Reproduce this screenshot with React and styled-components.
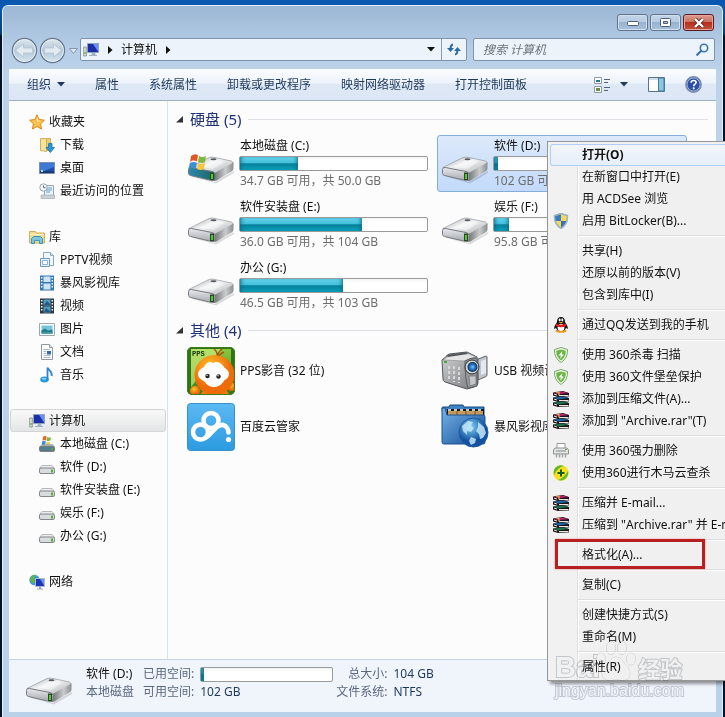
import React from "react";
import styled, { createGlobalStyle, css } from "styled-components";

const Global = createGlobalStyle`
  * { box-sizing: border-box; }
  body { margin: 0; overflow: hidden; background: #021227; }
  body, button, input {
    font-family: "Noto Sans", "Noto Sans CJK SC", sans-serif;
    font-size: 12px;
    line-height: 18px;
    color: #111;
  }
  button { border: 0; padding: 0; background: none; text-align: left; white-space: nowrap; }
  svg { display: block; flex: none; }
  ul { list-style: none; margin: 0; padding: 0; }
`;

const Desktop = styled.div`
  position: relative;
  min-height: 100vh;
  display: flex;
  padding: 5px 2px 0;
  overflow: hidden;
  background: linear-gradient(#0a57b0 0, #0a57b0 8px, #063a7c 34px, #021227 36px);
`;
const Window = styled.div`
  flex: 1;
  min-width: 0;
  display: flex;
  flex-direction: column;
  padding: 0 6px 5px;
  border: 1px solid #e3effa;
  border-bottom: 0;
  border-radius: 6px 6px 0 0;
  background: linear-gradient(#9cb7d4 0, #b4cce6 40px, #bcd3ea 70px, #b9d1e9 100%);
`;
const TitleBar = styled.header`
  display: flex;
  justify-content: flex-end;
  align-items: flex-start;
  height: 30px;
  padding-top: 8px;
  gap: 2px;
  margin-right: 2px;
`;
const Caption = styled.button`
  display: grid;
  place-items: center;
  width: 31px;
  height: 17px;
  border: 1px solid ${p => (p.$close ? "#5c1a22" : "#5f738c")};
  border-radius: 3px;
  box-shadow: inset 0 0 0 1px ${p => (p.$close ? "#e3a79f" : "#d3e1f0")};
  background: ${p => (p.$close
    ? "linear-gradient(#dc9a8d 0, #cd6f5e 48%, #b3301c 50%, #c4533a)"
    : "linear-gradient(#c3d5e8 0, #b5cae1 48%, #98b3d0 50%, #a9c2dc)")};
`;
const NavBar = styled.nav`
  display: flex;
  align-items: center;
  height: 33px;
  padding: 0 1px 6px 2px;
`;
const Travel = styled.div`
  display: flex;
  align-items: center;
  gap: 1px;
  width: 69px;
  margin-top: 2px;
`;
const Address = styled.div`
  flex: 1;
  display: flex;
  align-items: center;
  height: 23px;
  border: 1px solid #7f93ab;
  border-radius: 2px;
  background: #edf3fa;
  padding-left: 2px;
`;
const Crumb = styled.button`
  padding: 0 8px 0 9px;
`;
const History = styled(Crumb)`
  padding-right: 6px;
`;
const Spring = styled.div` flex: 1; `;
const Refresh = styled.button`
  display: grid;
  place-items: center;
  width: 25px;
  height: 21px;
  border-left: 1px solid #8b9cb1;
`;
const Search = styled.label`
  display: flex;
  align-items: center;
  width: 242px;
  height: 23px;
  margin-left: 6px;
  padding: 0 5px 0 9px;
  border: 1px solid #7f93ab;
  border-radius: 2px;
  background: #edf3fa;
  input {
    flex: 1;
    min-width: 0;
    border: 0;
    padding: 0;
    background: none;
    outline: 0;
    font-style: italic;
  }
  input::placeholder { color: #6d7278; opacity: 1; }
`;
const Client = styled.div`
  flex: 1;
  display: flex;
  flex-direction: column;
  background: #fcfcfd;
`;
const Toolbar = styled.div`
  display: flex;
  align-items: center;
  height: 32px;
  padding: 0 14px 0 18px;
  gap: 30px;
  background: linear-gradient(#fbfdff 0, #edf3fb 45%, #dfe8f5 50%, #dbe6f5);
  border-bottom: 1px solid #9fb0c6;
`;
const Tool = styled.button`
  display: flex;
  align-items: center;
  gap: 6px;
  color: #1e395b;
`;
const ToolGroup = styled.div`
  display: flex;
  align-items: center;
  gap: ${p => p.$gap}px;
`;
const Body = styled.div`
  flex: 1;
  display: flex;
`;
const Sidebar = styled.aside`
  width: 159px;
  border-right: 1px solid #d9e3ef;
  padding: 9px 1px;
  display: flex;
  flex-direction: column;
  gap: 23px;
`;
const TreeRow = styled.button`
  display: flex;
  align-items: center;
  gap: ${p => (p.$child ? 5 : 4)}px;
  width: 100%;
  height: 23px;
  padding-left: ${p => (p.$child ? 28 : 18)}px;
  border: 1px solid transparent;
  border-radius: 3px;
  ${p => p.$selected && css`
    border-color: #d2d4d6;
    background: linear-gradient(#f9f9f9, #e4e5e6);
  `}
`;
const Main = styled.main`
  flex: 1;
  min-width: 0;
  padding: 6px 8px 0;
`;
const GroupHead = styled.h2`
  display: flex;
  align-items: center;
  gap: 7px;
  margin: 0;
  height: 24px;
  font-size: 15px;
  font-weight: 400;
  line-height: 20px;
  color: #1f3278;
  &::after {
    content: "";
    flex: 1;
    height: 1px;
    background: #dde1e6;
  }
`;
const Grid = styled.div`
  display: grid;
  grid-template-columns: repeat(auto-fill, 250px);
  gap: ${p => p.$gap}px 4px;
  padding: 4px 0 4px 7px;
`;
const Tile = styled.div`
  display: flex;
  align-items: flex-start;
  gap: 4px;
  height: ${p => (p.$drive ? 57 : 56)}px;
  padding-left: 3px;
  border: 1px solid transparent;
  border-radius: 3px;
  ${p => p.$selected && css`
    border-color: #84acdd;
    background: linear-gradient(#dde9fa, #c2dafb);
  `}
`;
const Art = styled.div` padding-top: ${p => (p.$drive ? 8 : 0)}px; `;
const DriveInfo = styled.div`
  width: 190px;
  display: flex;
  flex-direction: column;
  gap: 1px;
  padding-top: 1px;
`;
const Name = styled.span` padding-left: 1px; white-space: nowrap; `;
const Label = styled(Name)` line-height: 48px; `;
const Free = styled(Name)` color: #6d6d6d; `;
const Meter = styled.div`
  height: 15px;
  width: ${p => (p.$wide ? 133 : 189)}px;
  border: 1px solid #9a9a9c;
  border-radius: 2px;
  background: linear-gradient(#f4f4f4, #fff 30%);
`;
const Fill = styled.div`
  height: 100%;
  background: linear-gradient(#66d3ea 0, #42c0dc 45%, #067f9a 52%, #0ca3bb 100%);
  box-shadow: inset 4px 0 4px -3px #0b6c87, inset -4px 0 4px -3px #0b6c87;
`;
const Details = styled.footer`
  display: flex;
  align-items: flex-start;
  height: 53px;
  padding: 5px 0 0 16px;
  border-top: 1px solid #c6d3e4;
  background: #f0f4fb;
  color: #1e395b;
  white-space: nowrap;
`;
const DetailsArt = styled.div` margin-right: 13px; `;
const Facts = styled.dl`
  display: grid;
  grid-template-columns: auto auto;
  column-gap: 6px;
  grid-auto-rows: 18px;
  align-items: center;
  margin: 0 0 0 ${p => p.$indent}px;
  dt { color: #5a6980; text-align: right; }
  dd { margin: 0; }
`;
const DetailsTitle = styled.div`
  strong { display: block; font-size: 12px; font-weight: 400; color: #111; }
  span { color: #5a6980; }
`;
const Menu = styled.div`
  position: absolute;
  left: 547px;
  top: 141px;
  width: 200px;
  padding: 2px;
  border: 1px solid #979797;
  background: linear-gradient(90deg, #f1f1f1 0, #f1f1f1 29px, #e0e0e0 29px, #e0e0e0 30px, #fff 30px, #fff 31px, #f0f0f0 31px);
  box-shadow: 3px 3px 3px #0006;
`;
const MenuItem = styled.button`
  position: relative;
  display: flex;
  align-items: center;
  width: 100%;
  height: 22px;
  border-radius: 3px;
  font-weight: ${p => (p.$bold ? 700 : 400)};
  ${p => p.$hot && css`
    box-shadow: inset 0 0 0 1px #aecff7;
    background: linear-gradient(#f3f6fa, #e6eef9);
  `}
`;
const MenuIcon = styled.span`
  flex: none;
  width: 32px;
  padding-left: 3px;
`;
const Rule = styled.hr`
  height: 2px;
  margin: 3px 0 3px 28px;
  border: 0;
  border-top: 1px solid #dedede;
  border-bottom: 1px solid #fff;
`;
const Marker = styled.span`
  position: absolute;
  left: 5px;
  top: -5px;
  width: 150px;
  height: 30px;
  border: 3px solid #b81f20;
  box-shadow: 0 0 2px #e88;
`;
const Watermark = styled.div`
  position: absolute;
  left: 555px;
  top: 640px;
  width: 140px;
  color: #fff;
  -webkit-text-stroke: 2px #cfd2d6;
  paint-order: stroke fill;
  mix-blend-mode: multiply;
  pointer-events: none;
`;
const Brand = styled.div`
  display: flex;
  align-items: center;
  height: 42px;
  padding-top: 11px;
  font: 700 29px/30px "Liberation Sans", sans-serif;
  b { font: 700 22px/30px "Noto Sans CJK SC", sans-serif; }
`;
const Site = styled.div`
  font: 400 16px/18px "Liberation Sans", sans-serif;
`;

/* ---------- drawings ---------- */
const Svg = ({ s = 16, w = s, h = s, vb, children }) => (
  <svg width={w} height={h} viewBox={vb || `0 0 ${w} ${h}`} aria-hidden="true">{children}</svg>
);
const Arrow = ({ down, color = "#111" }) => down
  ? <Svg w={8} h={5}><path d="M0 0h8L4 4.5z" fill={color} /></Svg>
  : <Svg w={5} h={8}><path d="M0 0v8l4.5-4z" fill={color} /></Svg>;

const Round = ({ flip }) => (
  <Svg s={27}>
    <defs><linearGradient id="rnd" x2="0" y2="1">
      <stop stopColor="#dfe8f0" /><stop offset=".5" stopColor="#b4c6d7" /><stop offset="1" stopColor="#d5e5f1" />
    </linearGradient></defs>
    <circle cx="13.5" cy="13.5" r="12" fill="url(#rnd)" stroke="#65788c" strokeWidth="1.4" />
    <circle cx="13.5" cy="13.5" r="11" fill="none" stroke="#e9f1f7" />
    <path transform={flip ? "matrix(-1 0 0 1 27 0)" : undefined} d="M4.500 13.500 12.500 7v4h9v5h-9v4z" fill="#e3ebf2" stroke="#b3c3d2" strokeWidth=".8" />
  </Svg>
);
const Computer = () => (
  <Svg>
    <path d="M.7 5h2.6v9H.7z" fill="#dfe3df" stroke="#7c8a80" strokeWidth=".8" /><path d="M1.5 10h1v2h-1z" fill="#4a9a3c" />
    <path d="M4.5 1.5h11v9h-11z" fill="#1a2fa8" stroke="#8fa3bd" />
    <path d="M10 2h5v7.5z" fill="#6d8df0" /><path d="M9 11h3l.6 2H14v1H6v-1h2.4z" fill="#9fb1c4" />
  </Svg>
);
const Star = () => <Svg><path d="m8 .8 2.2 4.7 5.2.7-3.8 3.6.9 5.2L8 12.5 3.500 15l.9-5.200L.6 6.200l5.200-.7z" fill="#fbc24a" stroke="#dd8420" /><path d="m8 3 1.400 3.400 3.200.5L8 8z" fill="#ffe9a8" /></Svg>;
const Downloads = () => <Svg><path d="M1.500 1.500h6v13l-6-1z" fill="#f6e39b" stroke="#d0b055" /><path d="M7.500 1.500h4v12h-4z" fill="#e8cd74" stroke="#d0b055" /><path d="M9.500 6.500h3.500v4h2.500l-4.200 5-4.300-5h2.500z" fill="#2d95d8" stroke="#1870ae" strokeWidth=".8" /></Svg>;
const DesktopIcon = () => <Svg><path d="M.5 2.500h15v11H.5z" fill="#1f4fae" stroke="#7c8fa8" /><path d="M1 3h14v4L5 11H1z" fill="#3f78d4" /><path d="M1 11h14v2H1z" fill="#173b78" /><path d="M2 10h2v2H2z" fill="#c7d8ee" /></Svg>;
const Recent = () => <Svg><path d="M5.500 2.500h9v10h-9z" fill="#eef4fa" stroke="#91a5b8" /><path d="M7 5h6M7 7h6M7 9h4" stroke="#5c9ac9" /><circle cx="4.500" cy="4.500" r="3.700" fill="#f5f7f9" stroke="#99a5b0" /><path d="M4.500 2.500v2.200H6.500" stroke="#667" fill="none" /><path d="M2 12h13.500v3.500H2z" fill="#c8d0d8" stroke="#99a5b0" strokeWidth=".6" /></Svg>;
const Library = () => <Svg><path d="M.5 2.500h6l1 1.500h8v10H.5z" fill="#f2dd91" stroke="#cfae5a" /><path d="M1 5.500h14" stroke="#fff3c8" /><path d="M2.500 14.500v-5l2-2h7l2 2v5h-3v-3h-5v3z" fill="#7cc6dd" stroke="#3f93b4" /></Svg>;
const Pptv = () => <Svg><path d="M4.500.5h7l3 3v10h-10z" fill="#f3f8fc" stroke="#87a9c4" /><path d="M11.500.5v3h3" fill="#cfe0ee" stroke="#87a9c4" /><path d="M1.500 6.500h9v8h-9z" fill="#e7f1f9" stroke="#6c9bc0" /><path d="M3.500 8.500h5v4h-5z" fill="#fff" stroke="#8eb3d0" /></Svg>;
const Film = ({ dark }) => <Svg><path d="M1 .5h14v15H1z" fill={dark ? "#2e363b" : "#3478b4"} /><path d="M4.500 1.500h7v6h-7zM4.500 8.500h7v6h-7z" fill={dark ? "#4d9fcb" : "#cde4f5"} /><path d={dark ? "m5 7 3-4 3 3v1zM5 14l2-4 4 3v1z" : "M4 7.500h8"} fill={dark ? "#205a83" : "none"} stroke={dark ? "none" : "#3478b4"} /><path d="M2.700 2v12M13.300 2v12" stroke="#fff" strokeWidth="1.500" strokeDasharray="1.500 1.500" /></Svg>;
const Picture = () => <Svg><path d="M.5 2.500h15v12H.5z" fill="#fff" stroke="#9aa8b3" /><path d="M2.500 4.500h11v8h-11z" fill="#75c3dc" /><path d="M2.500 9.500 6 7.500l3 2 4.500-1v4h-11z" fill="#247c8c" /><path d="M2.500 11h11v1.500h-11z" fill="#3a98a0" /></Svg>;
const Doc = () => <Svg><path d="M2.500.5h8l3 3v12h-11z" fill="#fff" stroke="#8d99a5" /><path d="M10.500.5v3h3" fill="#dde5ec" stroke="#8d99a5" /><path d="M4.500 5.500h6M4.500 7.500h3M4.500 9.500h3M4.500 11.500h7M4.500 13.500h7" stroke="#a9bac9" /><path d="M8 7h4v3.500H8z" fill="#326ca0" /></Svg>;
const Note = () => <Svg><ellipse cx="5.500" cy="12.500" rx="4.300" ry="3" fill="#299bdb" /><path d="M8.500 12.500V.5c1 3 5 3.500 4.200 8.500" fill="none" stroke="#3386c8" strokeWidth="1.800" /><ellipse cx="5" cy="11.800" rx="2.200" ry="1" fill="#84d0f4" /></Svg>;
const MiniDrive = ({ sys }) => (
  <Svg>
    {sys && <><path d="M4 1q2-2 3.500-.5L7 4.500Q5 3.500 3.500 4.500z" fill="#e8642c" /><path d="M8 1q2 1 4 0l-.7 3.600Q9 5.500 7.500 4.500z" fill="#7bb93c" /><path d="M3.300 5.200Q5 4.200 6.800 5.400L6 9.500H2.700z" fill="#3d8ed4" /><path d="M7.500 5.700q2 1 3.600.2L10.500 9.500H6.800z" fill="#f5c53a" /></>}
    <path d={sys ? "m2.500 9-2 2h15l-2-2.500z" : "m3 6.500-2.500 3h15l-2.500-3z"} fill={sys ? "#9fb5ba" : "#eceef0"} stroke="#9a9fa4" strokeWidth=".7" />
    <rect x=".5" y={sys ? 10.500 : 9} width="15" height={sys ? 5 : 5.500} rx="1.500" fill={sys ? "#547d88" : "#d9dcdf"} stroke="#777c80" strokeWidth=".9" />
    <path d={sys ? "M12 12h2v2h-2z" : "M12 10.500h2v3h-2z"} fill="#4fae35" />
  </Svg>
);
const Network = () => <Svg><circle cx="5.500" cy="6" r="5.200" fill="#3a9ed0" /><path d="M2 3q3-3 5-2L5 4l2 2-3 4-3-4z" fill="#63b24a" /><path d="M6.500 4.500h9v8h-9z" fill="#1b35b4" stroke="#a9bacd" /><path d="M11 5h4v6.500z" fill="#6d8df0" /><path d="M10 13h2v1.500h2v1H8v-1h2z" fill="#93a6ba" /></Svg>;

const Drive = ({ sys }) => (
  <Svg s={48}>
    <defs>
      <linearGradient id="dtop" x2="1" y2="1"><stop stopColor="#b9bbbd" /><stop offset=".45" stopColor="#f1f2f3" /><stop offset="1" stopColor="#a6a9ac" /></linearGradient>
      <linearGradient id="dfront" x2="0" y2="1"><stop stopColor="#e9eaf0" /><stop offset="1" stopColor="#a5a7ad" /></linearGradient>
      <linearGradient id="dside" x2="1" y2="0"><stop stopColor="#6f7276" /><stop offset=".6" stopColor="#c9cbcd" /><stop offset="1" stopColor="#8b8e91" /></linearGradient>
      <linearGradient id="dsys" x2="1" y2="0"><stop stopColor="#2e88b0" /><stop offset="1" stopColor="#17665c" /></linearGradient>
    </defs>
    <path d="M4 31 27 38 47 27v2L29 39.500 6 33z" fill="#0002" />
    <path d="M2 23.500 21 14q3-1.500 6-.7L44.500 17q2 .8 1.500 3L28 29.500 3 25z" fill="url(#dtop)" stroke="#85888b" strokeWidth=".6" />
    <path d="M46.500 18.500v6q0 2-2 3L29.500 36.500 27 37v-7.500z" fill="url(#dside)" />
    <path d="M1.500 25.500q0-2.500 3-2L25 27.500q3 .7 3 3V35q0 2-2.500 1.700L3.500 31.500q-2-.7-2-2z" fill={sys ? "url(#dsys)" : "url(#dfront)"} stroke="#76797e" />
    <path d="M12 22.500 26 15.500l11 2.500-11 7z" fill="#fff7" />
    <ellipse cx="26.500" cy="15.300" rx="3" ry="1" fill="#555a5f" />
    <path d="M23 28.500h4V36h-4z" fill="#244d20" /><path d="M24 30h2v5h-2z" fill="#58c03e" />
    {sys && <g><path d="M4 12q4-3 7-.8L10 17.500q-4-2-7 .5z" fill="#e0572a" /><path d="M12 12q4 2 7-.3L18 18q-3 2-7-.2z" fill="#80b83e" /><path d="M2.800 19q4-2 7-.2L9 25q-4-2-7.500.5z" fill="#3d8ed4" /><path d="M11 19q3 2 7 0L17 25q-3 2-7 0z" fill="#f7c63e" /></g>}
  </Svg>
);
const Pps = () => (
  <Svg s={48}>
    <defs>
      <linearGradient id="pg" x2="0" y2="1"><stop stopColor="#8dc63b" /><stop offset="1" stopColor="#357f18" /></linearGradient>
      <radialGradient id="po" cx=".4" cy=".3"><stop stopColor="#ffc62c" /><stop offset="1" stopColor="#ef6c0a" /></radialGradient>
      <clipPath id="pc"><rect width="48" height="48" rx="5" /></clipPath>
    </defs>
    <g clipPath="url(#pc)">
      <rect width="48" height="48" fill="#2f7416" /><path d="M4 2h40v44H4z" fill="url(#pg)" /><path d="M4 2h30L4 40z" fill="#c8ec7a" opacity=".7" />
      <path d="M30 10q1-5-3-8M30 10q1-5 5-8M31 9q4-3 6-4" fill="none" stroke="#a65510" strokeWidth="1.500" />
      <circle cx="8" cy="44" r="5" fill="url(#po)" /><circle cx="45" cy="40" r="4" fill="url(#po)" />
      <path d="M13 48q2-4 4-5h22l4 5z" fill="#ef7a10" />
      <ellipse cx="27.500" cy="28" rx="20" ry="20" fill="url(#po)" />
      <ellipse cx="26.500" cy="27" rx="15.500" ry="9" fill="#fff" /><path d="M17 20q4-7 9-4 6-3 11 4v14q-4 6-10 6t-10-6z" fill="#fff" />
      <circle cx="20.500" cy="29" r="2.200" fill="#222" /><circle cx="31.500" cy="29.500" r="2.200" fill="#222" />
      <circle cx="20" cy="28.300" r=".7" fill="#fff" /><circle cx="31" cy="28.800" r=".7" fill="#fff" />
    </g>
    <rect x=".5" y=".5" width="47" height="47" rx="5" fill="none" stroke="#3f7e1e" />
    <text x="5" y="9" fontFamily="Liberation Mono" fontWeight="700" fontSize="7" fill="#15350a">PPS</text>
  </Svg>
);
const Baidu = () => (
  <Svg s={48}>
    <defs><linearGradient id="bb" x2="0" y2="1"><stop stopColor="#5cb9f3" /><stop offset="1" stopColor="#2c9be0" /></linearGradient></defs>
    <rect x=".5" y=".5" width="47" height="47" rx="3" fill="url(#bb)" stroke="#3790cc" />
    <g fill="none" stroke="#fff" strokeWidth="4.500" strokeLinecap="round">
      <circle cx="13.500" cy="29" r="7.500" /><circle cx="24" cy="17.500" r="7.500" />
      <path d="M19 34.500q3-1.500 6-5.500l5-5q5-4 9-.5 2.500 2.500 2.500 6" />
    </g>
    <circle cx="41.500" cy="36.500" r="2.600" fill="#fff" />
  </Svg>
);
const Camera = () => (
  <Svg s={48}>
    <defs>
      <linearGradient id="cm" x2="1" y2="1"><stop stopColor="#d2d3d4" /><stop offset="1" stopColor="#77797c" /></linearGradient>
      <radialGradient id="cl"><stop stopColor="#7ac8ff" /><stop offset=".55" stopColor="#1e6ec4" /><stop offset="1" stopColor="#11304f" /></radialGradient>
    </defs>
    <g transform="translate(0 4)">
      <path d="m37 8 8-3q1 0 1 1v18q0 1-1 1.500L37 29z" fill="#bfc4ca" stroke="#666" /><path d="m40 10 5-2v14l-5 2z" fill="#e3e9f2" />
      <path d="m1 9 7-6 18-2 10 5 1 26q0 3-4 4l-7 2-22-7q-2-1-2-3z" fill="url(#cm)" stroke="#55585b" />
      <path d="m2 9 7-5 17-2 9 4-12 4z" fill="#e5e5e6" stroke="#808386" strokeWidth=".6" />
      <path d="m5 4 20-3 2 2-20 3z" fill="#55585b" />
      <path d="M24 10q6-4 12-3v28l-9 2q-3-9-3-27" fill="#96999c" stroke="#5b5e61" />
      <circle cx="31" cy="16" r="7" fill="#ccd0d4" stroke="#333" /><circle cx="31.500" cy="16" r="5" fill="url(#cl)" />
      <path d="M28 25h7v8l-6 2z" fill="#c5c6c8" stroke="#6a6d70" strokeWidth=".7" />
      <g stroke="#d8d9da" strokeWidth="2" strokeDasharray="3 2"><path d="M8 15v15M13 15v16M18 16v16" /></g>
      <path d="M3 11h3" stroke="#47a838" strokeWidth="2" />
    </g>
  </Svg>
);
const Folder = () => (
  <Svg s={48}>
    <defs>
      <linearGradient id="fl" x2="1" y2="1"><stop stopColor="#76b2ea" /><stop offset="1" stopColor="#124b92" /></linearGradient>
      <radialGradient id="gl" cx=".4" cy=".3"><stop stopColor="#7fd1f7" /><stop offset="1" stopColor="#12529f" /></radialGradient>
    </defs>
    <g transform="translate(0 2)">
      <path d="M1 3q0-1 1-1h6l1-2h13l1 2h20v12H2z" fill="#3c82c6" stroke="#16477d" />
      <path d="M6 4h37v9H6z" fill="#181818" /><path d="M7 6h35v6H7z" fill="#c8995c" /><path d="M7 5h36" stroke="#fff" strokeWidth="1.600" strokeDasharray="3 3" />
      <path d="M16 6v6M25 6v6M34 6v6" stroke="#74532d" />
      <path d="M1 3h3l2 7h36q2 0 2 2v25q0 2-2 2H3q-2 0-2-2z" fill="url(#fl)" stroke="#1d5492" />
      <circle cx="32.500" cy="27.500" r="14.500" fill="url(#gl)" stroke="#205c9f" />
      <path d="m21 21 6-5 5 1-2 4 3 2-3 4-4-1v4l-4-4zM37 17l6 5 2 6-3 5-3 1-1-5-3-3 2-4zM30 32l5 2-1 4-4 2-2-4z" fill="#c5e6fa" opacity=".85" />
    </g>
  </Svg>
);
const UacShield = () => <Svg><path d="M8 .5 14.500 2.500Q15 11 8 15.500 1 11 1.500 2.500z" fill="#f5d85c" stroke="#7fa0b5" /><path d="M8 1v7H2q-.5-3 0-5z" fill="#3a7cbe" /><path d="M8 8h6Q12.500 13 8 15z" fill="#2f72b7" /><path d="M8 .5 14.500 2.500Q15 11 8 15.500 1 11 1.500 2.500z" fill="none" stroke="#9db4c2" strokeWidth="1.400" /></Svg>;
const QQ = () => <Svg><ellipse cx="8" cy="14" rx="5.500" ry="1.800" fill="#f29b1d" /><path d="M8 0q4 0 4 5 3 4 3 7l-2-1q-1 3-5 3t-5-3l-2 1q0-3 3-7 0-5 4-5" fill="#161616" /><ellipse cx="8" cy="10.500" rx="3.400" ry="3.500" fill="#fff" /><ellipse cx="6.700" cy="3" rx="1" ry="1.400" fill="#fff" /><ellipse cx="9.300" cy="3" rx="1" ry="1.400" fill="#fff" /><path d="M5.500 5h5L8 6.500z" fill="#f7a81c" /><path d="M3 6.500q5 2.500 10 0v2.500q-5 2.500-10 0z" fill="#df2020" /></Svg>;
const GreenShield = () => <Svg><path d="m8 .5 6.500 2Q15 11 8 15.500 1 11 1.500 2.500z" fill="#f5faf2" stroke="#72a95d" /><path d="m8 2.500 4.800 1.300Q13 10 8 13.500 3 10 3.200 3.800z" fill="#6bb544" /><path d="M9.500 4 5.500 8.500H8L7 12l4-4.500H8.500z" fill="#fff" /></Svg>;
const Rar = () => (
  <Svg>
    {[["#b0206a", 0], ["#1a62a0", 5], ["#1a7048", 10]].map(([c, y]) => (
      <g key={c} transform={`translate(0 ${y})`}>
        <path d="m0 1.500 10-1.500 6 2v3.500L5 6 0 4.500z" fill="#1c1418" />
        <path d="m1 1.500 9-1 5.500 1.500L5 3.400z" fill={c} />
        <path d="M6 4h9.500v1.200H6z" fill="#e6e6e6" />
        <path d="m1 3 3 1" stroke="#e6e6e6" />
      </g>
    ))}
    <path d="m3 .8 3 .6v3" fill="none" stroke="#d8b84a" strokeWidth="1.200" />
  </Svg>
);
const Shredder = () => <Svg><path d="M4 .5h8v6H4z" fill="#fff" stroke="#999" /><path d="m2 5-1.500 2v4h15V7L14 5z" fill="#e4e5e5" stroke="#8e9092" /><path d="M3 8h10" stroke="#888" /><path d="M12 6.500h2" stroke="#65ae47" /><path d="M3.500 11v3M6.500 11v3M9.500 11v3M12.500 11v3" stroke="#a5a7a9" strokeWidth="1.500" strokeLinecap="round" /></Svg>;
const Plus360 = () => <Svg><circle cx="8" cy="8" r="7.700" fill="#f7e01d" /><path d="M2 3a7.700 7.700 0 0 1 9-2Q5 2 1 10Q0 6 2 3M5 15q6-2 10-9A7.700 7.700 0 0 1 5 15" fill="#62b930" /><path d="M8 4.500v7M4.500 8h7" stroke="#155b25" strokeWidth="2" /></Svg>;
const ViewIcon = () => <Svg w={17} h={16}><path d="M.5.500h7v6h-7zM.5 9.500h7v6h-7z" fill="#fff" stroke="#8b98a5" /><path d="M2 3h4v2H2z" fill="#24798d" /><path d="M2 11h4v3H2z" fill="#6f8e3d" /><path d="M10 2.500h6M10 5.500h4M10 10.500h6M10 13.500h4" stroke="#51647d" /></Svg>;
const PaneIcon = () => <Svg w={17} h={15}><path d="M.5.500h16v14H.5z" fill="#fff" stroke="#56748d" /><path d="M1 2h9" stroke="#a6b9ca" /><path d="M10.500 1h5.500v13h-5.500z" fill="#8fc6df" stroke="#3d7f9e" /></Svg>;
const Help = () => <Svg s={17}><circle cx="8.500" cy="8.500" r="7.700" fill="#2d4fa5" stroke="#7d8dae" strokeWidth="1.400" /><circle cx="8.500" cy="8.500" r="6.500" fill="none" stroke="#bdcbea" strokeWidth=".8" /><path d="M6 6.700Q6.200 4.500 8.600 4.500t2.500 2Q11 7.500 9.500 8.500 8.700 9 8.700 10.300" fill="none" stroke="#fff" strokeWidth="1.700" /><circle cx="8.700" cy="12.300" r="1.100" fill="#fff" /></Svg>;
const RefreshIcon = () => <Svg w={14} h={13}><path d="M0 5h7L3.500 9zM7 8h7l-3.500-4z" fill="#2c6ca5" /><path d="M6 1.500Q3.500 2 3.500 6M8 11.500q2.500-.5 2.500-5" fill="none" stroke="#2c6ca5" strokeWidth="2" /></Svg>;
const Magnifier = () => <Svg s={13}><circle cx="8" cy="5" r="3.700" fill="#eef5fb" stroke="#3b74aa" strokeWidth="1.600" /><path d="M5 8 1.200 11.800" stroke="#3b74aa" strokeWidth="2.200" strokeLinecap="round" /></Svg>;
const Paw = () => (
  <Svg w={42} h={42}>
    <g fill="#fff" stroke="#cfd2d6"><ellipse cx="6" cy="19" rx="4.500" ry="6" /><ellipse cx="16" cy="8" rx="4.500" ry="6.500" /><ellipse cx="27" cy="8" rx="4.500" ry="6.500" /><ellipse cx="36" cy="19" rx="4.500" ry="6" />
      <path d="M21 17q5 0 8 6 6 5 6 10 0 8-9 7-5-1-10 0-9 1-9-7 0-5 6-10 3-6 8-6" /></g>
    <text x="12" y="37" fontFamily="Liberation Sans" fontSize="18" fontWeight="700" fill="#fff">du</text>
  </Svg>
);
const PawSlot = styled.span` margin: -12px 1px 0 -5px; `;

/* ---------- data ---------- */
const tree = [
  [["收藏夹", <Star />], ["下载", <Downloads />], ["桌面", <DesktopIcon />], ["最近访问的位置", <Recent />]],
  [["库", <Library />], ["PPTV视频", <Pptv />], ["暴风影视库", <Film />], ["视频", <Film dark />], ["图片", <Picture />], ["文档", <Doc />], ["音乐", <Note />]],
  [["计算机", <Computer />], ["本地磁盘 (C:)", <MiniDrive sys />], ["软件 (D:)", <MiniDrive />], ["软件安装盘 (E:)", <MiniDrive />], ["娱乐 (F:)", <MiniDrive />], ["办公 (G:)", <MiniDrive />]],
  [["网络", <Network />]],
];
const drives = [
  { name: "本地磁盘 (C:)", free: "34.7 GB 可用，共 50.0 GB", used: 31, sys: true },
  { name: "软件 (D:)", free: "102 GB 可用，共 104 GB", used: 2, selected: true },
  { name: "软件安装盘 (E:)", free: "36.0 GB 可用，共 104 GB", used: 65 },
  { name: "娱乐 (F:)", free: "95.8 GB 可用，共 104 GB", used: 8 },
  { name: "办公 (G:)", free: "46.5 GB 可用，共 103 GB", used: 55 },
];
const others = [
  ["PPS影音 (32 位)", <Pps />], ["USB 视频设备", <Camera />],
  ["百度云管家", <Baidu />], ["暴风影视库", <Folder />],
];
const menu = [
  [["打开(O)", null, "hot"], ["在新窗口中打开(E)"], ["用 ACDSee 浏览"], ["启用 BitLocker(B)...", <UacShield />]],
  [["共享(H)"], ["还原以前的版本(V)"], ["包含到库中(I)"]],
  [["通过QQ发送到我的手机", <QQ />]],
  [["使用 360杀毒 扫描", <GreenShield />], ["使用 360文件堡垒保护", <GreenShield />], ["添加到压缩文件(A)...", <Rar />], ["添加到 \"Archive.rar\"(T)", <Rar />]],
  [["使用 360强力删除", <Shredder />], ["使用360进行木马云查杀", <Plus360 />]],
  [["压缩并 E-mail...", <Rar />], ["压缩到 \"Archive.rar\" 并 E-mail", <Rar />]],
  [["格式化(A)...", null, "marked"]],
  [["复制(C)"]],
  [["创建快捷方式(S)"], ["重命名(M)"]],
  [["属性(R)"]],
];
const Tri = () => <Svg w={7} h={7}><path d="M7 0v6.500H0z" fill="#333" /></Svg>;

export default function App() {
  return (
    <Desktop>
      <Global />
      <Window>
        <TitleBar>
          <Caption aria-label="最小化"><Svg w={12} h={7}><rect x=".5" y="2.500" width="11" height="4" rx="1" fill="#fff" stroke="#4e5f73" /></Svg></Caption>
          <Caption aria-label="最大化"><Svg w={11} h={9}><rect x=".5" y=".5" width="10" height="8" rx="1" fill="#fff" stroke="#4e5f73" /><path d="M3.500 3.500h4v2h-4z" fill="#a9c2dc" stroke="#4e5f73" /></Svg></Caption>
          <Caption $close aria-label="关闭"><Svg w={12} h={10}><path d="m2 1 8 8M10 1 2 9" stroke="#5d2a2c" strokeWidth="4" /><path d="m2 1 8 8M10 1 2 9" stroke="#fff" strokeWidth="2.400" /></Svg></Caption>
        </TitleBar>
        <NavBar>
          <Travel>
            <button aria-label="后退"><Round /></button>
            <button aria-label="前进"><Round flip /></button>
            <Svg w={11} h={6}><path d="M2.500.5h8l-4 5z" fill="#dbe7f3" stroke="#8499b0" /></Svg>
          </Travel>
          <Address>
            <Computer />
            <Crumb aria-label="展开"><Arrow /></Crumb>
            <button>计算机</button>
            <Crumb aria-label="展开计算机"><Arrow /></Crumb>
            <Spring />
            <History aria-label="历史记录"><Arrow down /></History>
            <Refresh aria-label="刷新"><RefreshIcon /></Refresh>
          </Address>
          <Search><input aria-label="搜索" placeholder="搜索 计算机" /><Magnifier /></Search>
        </NavBar>
        <Client>
          <Toolbar>
            <Tool>组织<Arrow down color="#1e395b" /></Tool>
            {["属性", "系统属性", "卸载或更改程序", "映射网络驱动器", "打开控制面板"].map(t => <Tool key={t}>{t}</Tool>)}
            <Spring />
            <ToolGroup $gap={20}>
              <ToolGroup $gap={9}>
                <button aria-label="更改视图"><ViewIcon /></button>
                <button aria-label="更多选项"><Arrow down color="#1e395b" /></button>
              </ToolGroup>
              <button aria-label="预览窗格"><PaneIcon /></button>
              <button aria-label="帮助"><Help /></button>
            </ToolGroup>
          </Toolbar>
          <Body>
            <Sidebar>
              {tree.map((rows, i) => (
                <ul key={i}>{rows.map(([label, icon], j) => (
                  <li key={label}><TreeRow $child={j > 0} $selected={label === "计算机"}>{icon}{label}</TreeRow></li>
                ))}</ul>
              ))}
            </Sidebar>
            <Main>
              <GroupHead><Tri />硬盘 (5)</GroupHead>
              <Grid $gap={4}>
                {drives.map(d => (
                  <Tile key={d.name} $drive $selected={d.selected}>
                    <Art $drive><Drive sys={d.sys} /></Art>
                    <DriveInfo>
                      <Name>{d.name}</Name>
                      <Meter><Fill style={{ width: `${d.used}%` }} /></Meter>
                      <Free>{d.free}</Free>
                    </DriveInfo>
                  </Tile>
                ))}
              </Grid>
              <GroupHead><Tri />其他 (4)</GroupHead>
              <Grid $gap={0}>
                {others.map(([label, icon]) => (
                  <Tile key={label}><Art>{icon}</Art><Label>{label}</Label></Tile>
                ))}
              </Grid>
            </Main>
          </Body>
          <Details>
            <DetailsArt><Drive /></DetailsArt>
            <DetailsTitle><strong>软件 (D:)</strong><span>本地磁盘</span></DetailsTitle>
            <Facts $indent={9}>
              <dt>已用空间:</dt><dd><Meter $wide><Fill style={{ width: "2%" }} /></Meter></dd>
              <dt>可用空间:</dt><dd>102 GB</dd>
            </Facts>
            <Facts $indent={3}>
              <dt>总大小:</dt><dd>104 GB</dd>
              <dt>文件系统:</dt><dd>NTFS</dd>
            </Facts>
          </Details>
        </Client>
      </Window>
      <Menu role="menu">
        {menu.map((group, i) => (
          <React.Fragment key={i}>
            {i > 0 && <Rule />}
            {group.map(([label, icon, kind]) => (
              <MenuItem key={label} role="menuitem" $bold={kind === "hot"} $hot={kind === "hot"}>
                <MenuIcon>{icon}</MenuIcon>{label}
                {kind === "marked" && <Marker />}
              </MenuItem>
            ))}
          </React.Fragment>
        ))}
      </Menu>
      <Watermark>
        <Brand>Bai<PawSlot><Paw /></PawSlot><b>经验</b></Brand>
        <Site>jingyan.baidu.com</Site>
      </Watermark>
    </Desktop>
  );
}
